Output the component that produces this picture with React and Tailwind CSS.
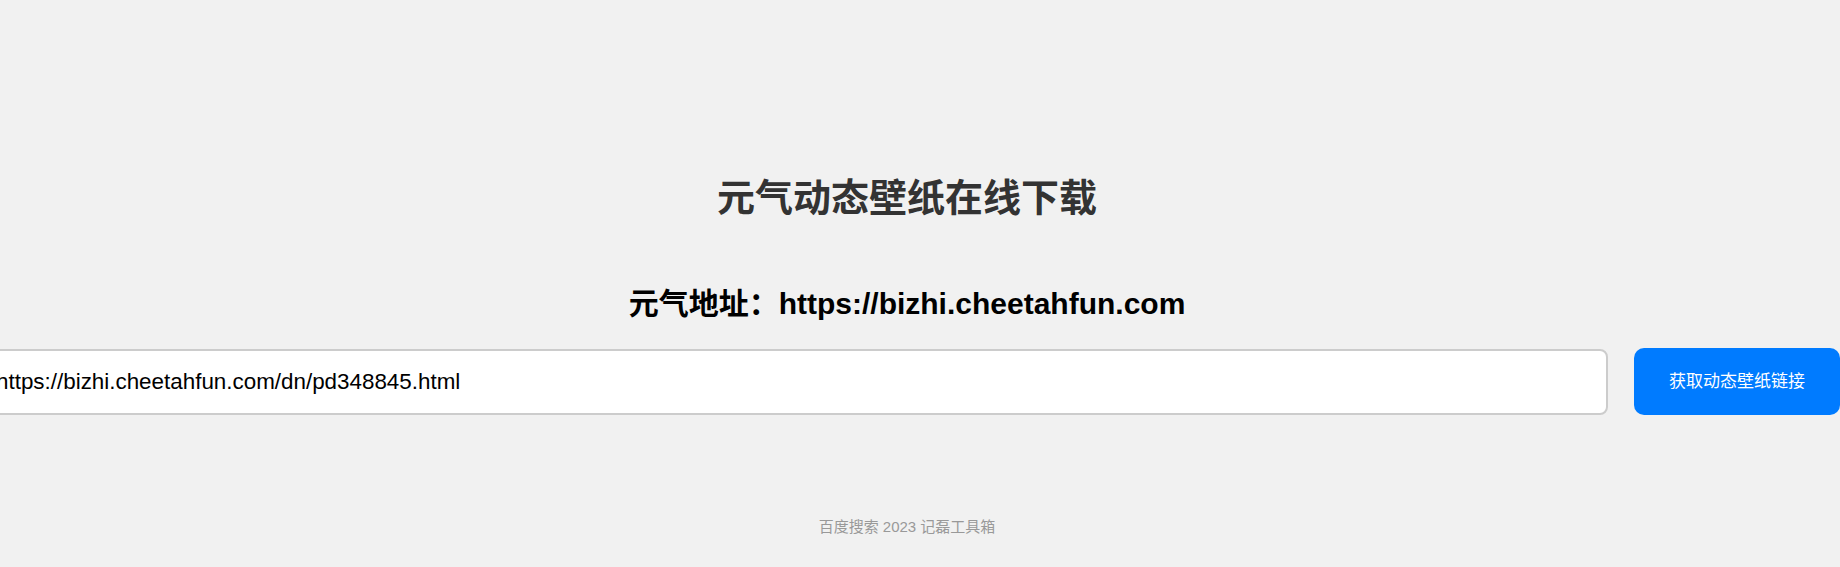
const App = () => {
  return (
    <div
      className="min-h-screen h-[567px] bg-[#f1f1f1] overflow-hidden"
      style={{ fontFamily: '"Liberation Sans", "Noto Sans CJK SC", sans-serif' }}
    >
      <div className="-ml-[26px] w-[calc(100%+26px)] pt-[174px] flex flex-col items-center">
        <h1 className="text-[38px] leading-[48px] font-bold text-[#333333]">
          元气动态壁纸在线下载
        </h1>
        <h2 className="mt-[64px] text-[30px] leading-[36px] font-bold text-black">
          元气地址：https://bizhi.cheetahfun.com
        </h2>
        <div className="mt-[26px] w-full flex items-center gap-[26px]">
          <input
            type="text"
            defaultValue="https://bizhi.cheetahfun.com/dn/pd348845.html"
            className="flex-1 h-[66px] px-5 bg-white border-2 border-[#cccccc] rounded-lg text-[22.4px] text-black outline-none"
          />
          <button className="w-[206px] h-[67px] bg-[#007bff] text-white text-[17px] rounded-[10px]">
            获取动态壁纸链接
          </button>
        </div>
        <p className="mt-[102px] text-[15px] leading-[20px] text-[#999999]">
          百度搜索 2023 记磊工具箱
        </p>
      </div>
    </div>
  );
};

export default App;
